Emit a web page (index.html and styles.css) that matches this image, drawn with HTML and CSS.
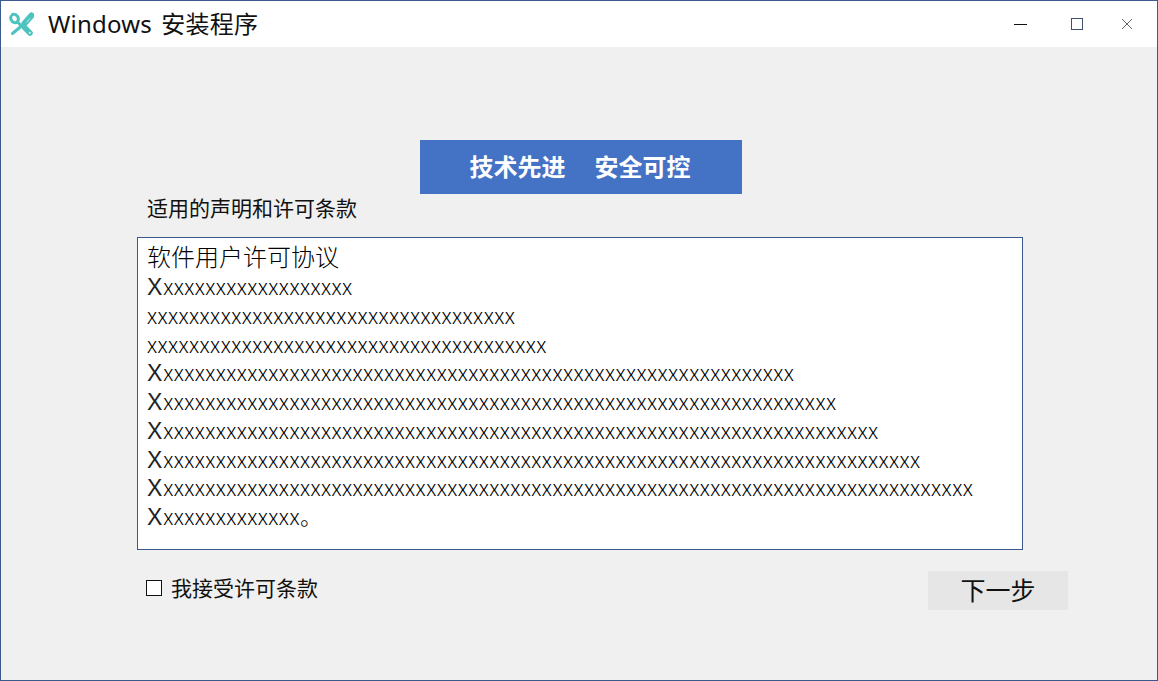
FILE: index.html
```html
<!DOCTYPE html>
<html lang="zh-CN">
<head>
<meta charset="utf-8">
<title>Windows 安装程序</title>
<link rel="stylesheet" href="styles.css">
</head>
<body>
<div class="window">
  <header class="titlebar">
    <svg class="app-icon" width="26" height="24" viewBox="0 0 26 24" fill="none">
      <path d="M3 4.500 A4.600 4.600 0 0 0 9 10.300 M9.300 9.800 A4.600 4.600 0 0 0 4.500 2.500" stroke="#4cc4bd" stroke-width="3" stroke-linecap="round"/>
      <path d="M9.500 10 L13.500 14" stroke="#4cc4bd" stroke-width="3"/>
      <path d="M16.500 15.500 L22 21" stroke="#4cc4bd" stroke-width="5.500" stroke-linecap="round"/>
      <circle cx="21.800" cy="20.800" r="1" fill="#dff5f3"/>
      <path d="M23.500 3.500 L16.500 11.500" stroke="#4cc4bd" stroke-width="6" stroke-linecap="round"/>
      <path d="M22 6.500 L18.500 10.500" stroke="#bdeae6" stroke-width="1"/>
      <path d="M13.500 14 L4.500 21.500" stroke="#4cc4bd" stroke-width="3" stroke-linecap="round"/>
    </svg>
    <span class="title">Windows 安装程序</span>
    <div class="controls">
      <svg class="ctl ctl-min" width="14" height="14" viewBox="0 0 14 14"><path d="M0 7.500H13" stroke="#111" stroke-width="1"/></svg>
      <svg class="ctl" width="14" height="14" viewBox="0 0 14 14"><rect x="1.500" y="1.500" width="11" height="11" fill="none" stroke="#3f4f70" stroke-width="1"/></svg>
      <svg class="ctl" width="14" height="14" viewBox="0 0 14 14"><path d="M2 2L12 12M12 2L2 12" stroke="#666" stroke-width="1"/></svg>
    </div>
  </header>
  <main class="content">
    <div class="banner"><span class="banner-text">技术先进</span><span class="banner-gap"></span><span class="banner-text">安全可控</span></div>
    <div class="license-label">适用的声明和许可条款</div>
    <div class="license-box">
      <div class="license-head">软件用户许可协议</div>
      <div class="line"><span class="cap">X</span>xxxxxxxxxxxxxxxxxx</div>
      <div class="line">xxxxxxxxxxxxxxxxxxxxxxxxxxxxxxxxxxx</div>
      <div class="line">xxxxxxxxxxxxxxxxxxxxxxxxxxxxxxxxxxxxxx</div>
      <div class="line"><span class="cap">X</span>xxxxxxxxxxxxxxxxxxxxxxxxxxxxxxxxxxxxxxxxxxxxxxxxxxxxxxxxxxxx</div>
      <div class="line"><span class="cap">X</span>xxxxxxxxxxxxxxxxxxxxxxxxxxxxxxxxxxxxxxxxxxxxxxxxxxxxxxxxxxxxxxxx</div>
      <div class="line"><span class="cap">X</span>xxxxxxxxxxxxxxxxxxxxxxxxxxxxxxxxxxxxxxxxxxxxxxxxxxxxxxxxxxxxxxxxxxxx</div>
      <div class="line"><span class="cap">X</span>xxxxxxxxxxxxxxxxxxxxxxxxxxxxxxxxxxxxxxxxxxxxxxxxxxxxxxxxxxxxxxxxxxxxxxxx</div>
      <div class="line"><span class="cap">X</span>xxxxxxxxxxxxxxxxxxxxxxxxxxxxxxxxxxxxxxxxxxxxxxxxxxxxxxxxxxxxxxxxxxxxxxxxxxxxx</div>
      <div class="line"><span class="cap">X</span>xxxxxxxxxxxxx。</div>
    </div>
    <div class="footer-row">
      <label class="accept"><span class="checkbox"></span><span class="accept-text">我接受许可条款</span></label>
      <div class="next"><span class="next-text">下一步</span></div>
    </div>
  </main>
</div>
</body>
</html>
```
FILE: styles.css
```css
* { box-sizing: border-box; }
html, body { margin: 0; padding: 0; }
body {
  width: 1158px;
  height: 681px;
  overflow: hidden;
  font-family: "Noto Sans CJK SC", "Liberation Sans", sans-serif;
  color: #111;
}
.window {
  width: 1158px;
  height: 681px;
  border: 1px solid #3b5a8c;
  background: #f0f0f0;
  display: flex;
  flex-direction: column;
}
.titlebar {
  height: 46px;
  background: #fff;
  display: flex;
  align-items: center;
  flex: none;
}
.app-icon { margin-left: 7px; flex: none; }
.title {
  margin-left: 14px;
  font-family: "Noto Sans", "Noto Sans CJK SC", sans-serif;
  font-size: 24px;
  letter-spacing: 0.200px;
  word-spacing: 3px;
  line-height: 46px;
  color: #111;
  white-space: nowrap;
}
.controls {
  margin-left: auto;
  display: flex;
  gap: 36px;
  padding-right: 23px;
}
.ctl { display: block; }
.ctl-min { margin-right: 6px; }
.content {
  flex: 1;
  display: flex;
  flex-direction: column;
  padding: 93px 0 0 136px;
}
.banner {
  align-self: flex-start;
  margin-left: 283px;
  width: 322px;
  height: 54px;
  padding: 0 2px 3px 0;
  background: #4472c4;
  color: #fff;
  font-size: 24px;
  font-weight: 700;
  display: flex;
  align-items: center;
  justify-content: center;
  white-space: nowrap;
}
.banner-gap { width: 29px; }
.license-label {
  margin: 0 0 0 10px;
  height: 30px;
  font-size: 21px;
  line-height: 26px;
  white-space: nowrap;
}
.license-box {
  margin-top: 13px;
  width: 886px;
  height: 313px;
  background: #fff;
  border: 1px solid #3b5a8c;
  padding: 2px 0 0 9px;
  font-family: "Noto Sans CJK SC", sans-serif;
  font-weight: 300;
  font-size: 22px;
  line-height: 28.750px;
  color: #000;
  white-space: nowrap;
  overflow: hidden;
}
.license-head { font-size: 24px; height: 31px; line-height: 32px; }
.line { height: 28.750px; letter-spacing: 0.400px; }
.cap { font-family: "Liberation Sans", sans-serif; font-weight: 400; font-size: 23px; color: #222; margin-right: 0.400px; }
.footer-row {
  display: flex;
  align-items: flex-start;
  margin-top: 21px;
  width: 931px;
  justify-content: space-between;
}
.accept {
  display: flex;
  align-items: center;
  margin: 1px 0 0 9px;
  height: 32px;
  font-size: 21px;
  white-space: nowrap;
}
.checkbox {
  width: 16px;
  height: 16px;
  border: 1px solid #111;
  background: #fff;
  margin-right: 9px;
}
.accept-text { line-height: 28px; padding-bottom: 2px; }
.next {
  width: 140px;
  height: 39px;
  padding-bottom: 3px;
  background: #e6e6e6;
  font-size: 25px;
  display: flex;
  align-items: center;
  justify-content: center;
}
.next-text { line-height: 36px; }
```
